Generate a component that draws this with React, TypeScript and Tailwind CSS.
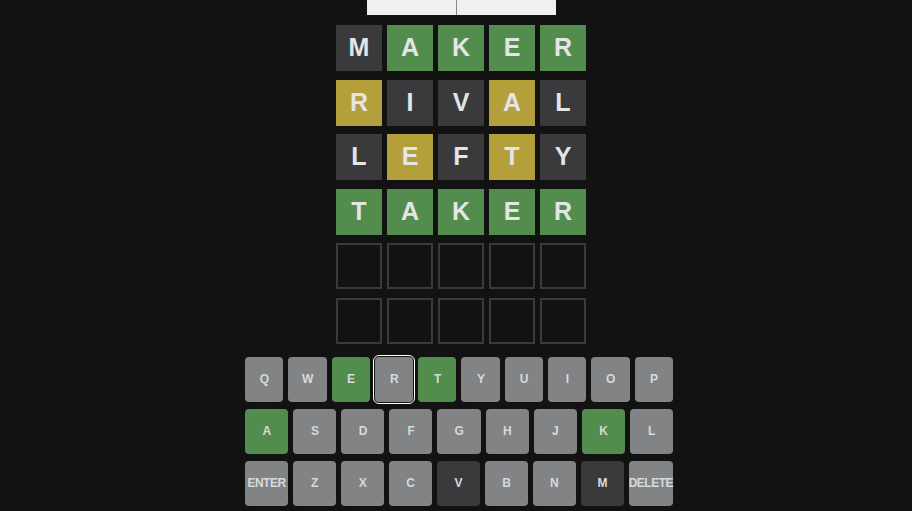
const rows: [string, string][] = [
  ["MAKER", "xgggg"],
  ["RIVAL", "yxxyx"],
  ["LEFTY", "xyxyx"],
  ["TAKER", "ggggg"],
  ["     ", "eeeee"],
  ["     ", "eeeee"],
];

const tileColor: Record<string, string> = {
  g: "bg-[#538d4e] border-[#538d4e]",
  y: "bg-[#b59f3b] border-[#b59f3b]",
  x: "bg-[#3a3a3c] border-[#3a3a3c]",
  e: "bg-[#121213] border-[#3a3a3c]",
};

const green = ["E", "T", "A", "K"];
const dark = ["V", "M"];

const keyRows = [
  ["Q", "W", "E", "R", "T", "Y", "U", "I", "O", "P"],
  ["A", "S", "D", "F", "G", "H", "J", "K", "L"],
  ["ENTER", "Z", "X", "C", "V", "B", "N", "M", "DELETE"],
];

function Key({ k }: { k: string }) {
  let color = "bg-[#818384]";
  if (green.includes(k)) color = "bg-[#538d4e]";
  if (dark.includes(k)) color = "bg-[#3a3a3c]";
  const focused = k === "R";
  return (
    <button
      className={`flex h-[45px] flex-1 items-center justify-center rounded-[4px] text-[12px] font-bold text-[#d7dadc] ${color} ${
        focused ? "outline outline-1 outline-offset-1 outline-white" : ""
      }`}
    >
      <span className="tracking-[-0.5px]">{k}</span>
    </button>
  );
}

export default function App() {
  return (
    <div
      className="flex h-[511px] w-full flex-col items-center overflow-hidden bg-[#121212] pl-[8px]"
      style={{ fontFamily: '"Liberation Sans", Arial, sans-serif' }}
    >
      {/* top bar */}
      <div className="flex h-[15px] w-[191px] shrink-0 pl-[2px]">
        <div className="h-full w-[90px] border-r border-[#888] bg-[#f0f0f0]" />
        <div className="h-full flex-1 bg-[#f0f0f0]" />
      </div>

      {/* board */}
      <div className="mt-[10px] flex flex-col gap-[8.6px] pl-[2px]">
        {rows.map(([word, colors], r) => (
          <div key={r} className="flex gap-[5px]">
            {word.split("").map((ch, i) => (
              <div
                key={i}
                className={`flex h-[46px] w-[46px] items-center justify-center border-2 text-[25px] font-bold text-[#e3e5e6] ${tileColor[colors[i]]}`}
              >
                {ch.trim()}
              </div>
            ))}
          </div>
        ))}
      </div>

      {/* keyboard */}
      <div className="mt-[13px] flex w-[428px] flex-col gap-[7px] pr-[2px] box-content">
        {keyRows.map((row, r) => (
          <div key={r} className="flex gap-[5px]">
            {row.map((k) => (
              <Key key={k} k={k} />
            ))}
          </div>
        ))}
      </div>
    </div>
  );
}
